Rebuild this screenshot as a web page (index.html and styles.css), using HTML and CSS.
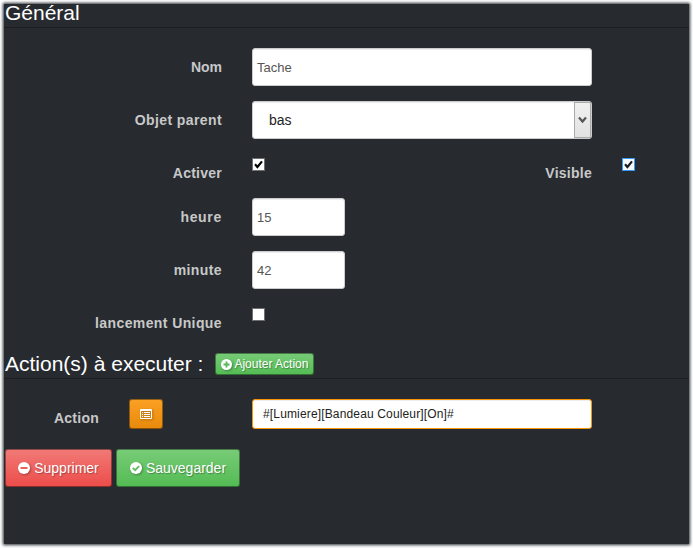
FILE: index.html
```html
<!DOCTYPE html>
<html lang="fr">
<head>
<meta charset="utf-8">
<title>Tache</title>
<link rel="stylesheet" href="styles.css">
</head>
<body>
<main class="panel">
  <h2 class="legend">Général</h2>
  <div class="form">
    <div class="row"><label class="label">Nom</label><div class="field">Tache</div></div>
    <div class="row"><label class="label wide">Objet parent</label>
      <div class="field select"><span>bas</span><i class="arrow"><svg width="9" height="8" viewBox="0 0 9 8"><path d="M1 1.500 4.500 5.500 8 1.500" fill="none" stroke="#555" stroke-width="2.200"/></svg></i></div>
    </div>
    <div class="row short"><label class="label mid">Activer</label>
      <span class="check"><svg width="11" height="11" viewBox="0 0 11 11"><path d="M2 5.200 4.400 8 9 2.300" fill="none" stroke="#000" stroke-width="2.100"/></svg></span>
      <label class="label second mid">Visible</label>
      <span class="check focus"><svg width="11" height="11" viewBox="0 0 11 11"><path d="M2 5.200 4.400 8 9 2.300" fill="none" stroke="#1a1a1a" stroke-width="2.100"/></svg></span>
    </div>
    <div class="row"><label class="label wider">heure</label><div class="field small">15</div></div>
    <div class="row"><label class="label wide">minute</label><div class="field small">42</div></div>
    <div class="row short"><label class="label wide">lancement Unique</label><span class="check"></span></div>
  </div>
  <h2 class="legend actions"><span>Action(s) à executer :</span>
    <button class="btn green mini"><svg width="11" height="11" viewBox="0 0 12 12"><circle cx="6" cy="6" r="6" fill="#fff"/><path d="M6 2.700v6.600M2.700 6h6.600" stroke="#59b75a" stroke-width="2"/></svg><span>Ajouter Action</span></button>
  </h2>
  <div class="row action">
    <label class="label mid">Action</label>
    <button class="btn orange"><svg width="12" height="10" viewBox="0 0 12 10"><path fill="#fff" fill-rule="evenodd" d="M1 0h10a1 1 0 0 1 1 1v8a1 1 0 0 1-1 1H1a1 1 0 0 1-1-1V1a1 1 0 0 1 1-1ZM1 2v7h10V2Z"/><path d="M2 3.500h1M4 3.500h6M2 5.500h1M4 5.500h6M2 7.500h1M4 7.500h6" stroke="#fff"/></svg></button>
    <div class="field command">#[Lumiere][Bandeau Couleur][On]#</div>
  </div>
  <div class="buttons">
    <button class="btn red"><svg width="12" height="12" viewBox="0 0 12 12"><circle cx="6" cy="6" r="6" fill="#fff"/><path d="M2.500 6h7" stroke="#e9605d" stroke-width="2"/></svg><span>Supprimer</span></button>
    <button class="btn green"><svg width="12" height="12" viewBox="0 0 12 12"><circle cx="6" cy="6" r="6" fill="#fff"/><path d="m2.800 5.900 2.300 2.300 4-4" fill="none" stroke="#62bd62" stroke-width="1.900"/></svg><span>Sauvegarder</span></button>
  </div>
</main>
</body>
</html>
```
FILE: styles.css
```css
* { box-sizing: border-box; }
body {
  margin: 0;
  padding: 4px;
  width: 693px;
  height: 548px;
  overflow: hidden;
  background: #fff;
  font-family: "Liberation Sans", Arial, sans-serif;
  font-size: 14px;
  color: #c8c8c8;
}
.panel {
  width: 685px;
  height: 540px;
  background: #272b30;
  box-shadow: 0 0 3px 1px #272b30;
}
.legend {
  display: flex;
  align-items: center;
  height: 24px;
  margin: 0;
  padding: 0 0 5px 1px;
  border-bottom: 1px solid #1c1e22;
  font-size: 21px;
  font-weight: 400;
  line-height: 20px;
  color: #fff;
  white-space: nowrap;
}
.form { padding-top: 20px; }
.row { display: flex; height: 38px; margin-bottom: 15px; }
.row.short { height: 29px; }
.label {
  width: 218px;
  margin-right: 30px;
  padding-top: 9px;
  font-weight: 700;
  line-height: 20px;
  text-align: right;
}
.label.second { width: 327px; }
.mid { letter-spacing: .25px; }
.wide { letter-spacing: .4px; }
.wider { letter-spacing: .7px; }
.field {
  width: 340px;
  height: 38px;
  padding: 0 4px;
  border: 1px solid #ccc;
  border-radius: 3px;
  background: #fff;
  box-shadow: inset 0 1px 1px rgba(0, 0, 0, .075);
  color: #555;
  font-size: 13px;
  line-height: 37px;
}
.field.small { width: 93px; }
.field.select {
  display: flex;
  justify-content: space-between;
  padding: 0 0 0 16px;
  font-size: 14px;
  color: #222;
}
.arrow {
  display: flex;
  align-items: center;
  justify-content: center;
  width: 17px;
  border: 1px solid #aaa;
  background: linear-gradient(#f0f0f0, #e2e2e2);
}
.check {
  display: flex;
  width: 13px;
  height: 13px;
  margin-top: 4px;
  border: 1px solid #707070;
  background: #fff;
}
.check.focus { border-color: #3399ff; background: #f3f9ff; }
.legend.actions { height: 27px; margin-top: 19px; padding-bottom: 2px; }
.btn {
  display: flex;
  align-items: center;
  justify-content: center;
  gap: 4px;
  height: 38px;
  padding: 0;
  border: 1px solid rgba(0, 0, 0, .4);
  border-radius: 3px;
  background-origin: border-box;
  color: #fff;
  font: 14px "Liberation Sans", Arial, sans-serif;
  text-shadow: 1px 1px 1px rgba(0, 0, 0, .3);
}
.btn svg { filter: drop-shadow(1px 1px 1px rgba(0, 0, 0, .3)); }
.green { width: 124px; background-image: linear-gradient(#78cc78, #53bb53); }
.red { width: 107px; background-image: linear-gradient(#f17a77, #ec4c49); }
.orange { width: 34px; height: 30px; background-image: linear-gradient(#faa123, #e8890c); }
.mini { width: 99px; height: 22px; margin-left: 12px; gap: 2px; font-size: 12px; }
.row.action { height: 30px; margin: 20px 0; }
.action .label { width: 95px; }
.field.command {
  height: 30px;
  margin-left: 89px;
  padding-left: 10px;
  border-color: #f89406;
  color: #222;
  font-size: 12px;
  letter-spacing: .15px;
  line-height: 28px;
}
.buttons { display: flex; gap: 4px; padding-left: 1px; }
```
